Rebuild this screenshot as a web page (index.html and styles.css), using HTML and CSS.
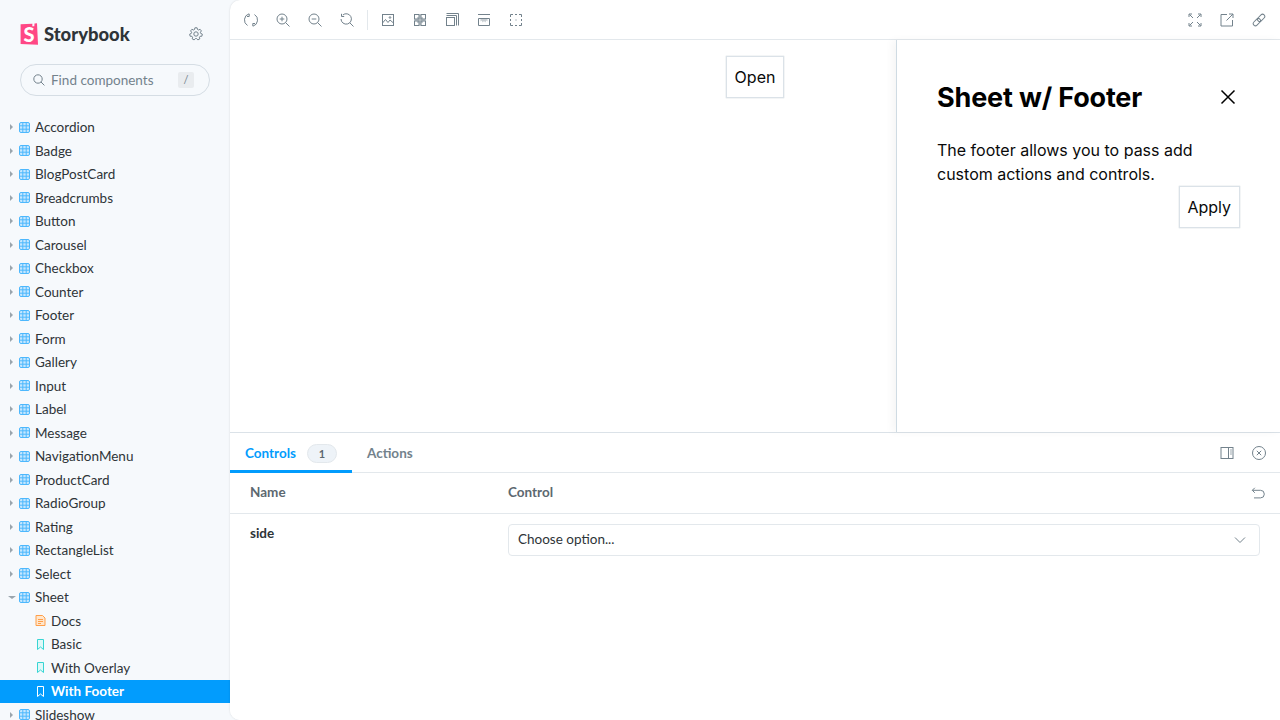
FILE: index.html
```html
<!DOCTYPE html>
<html lang="en">
<head>
    <meta charset="UTF-8">
    <title>Storybook</title>
    <link rel="stylesheet" href="styles.css">
</head>
<body>
    <div class="app">
        <!-- Sidebar -->
        <aside class="sidebar">
            <div class="brand">
                <div class="logo">
                    <svg class="logo-mark" width="18" height="22" viewBox="0 0 18 22"><path d="M.6 1.300 12.400.7 12.300 3.300 14.300 3.200 14.500.5 17 .3 18 21.700.6 21Z" fill="#ff4785"/></svg>
                    <span class="logo-s">S</span>
                    <span class="logo-text">Storybook</span>
                </div>
                <svg class="icon gear" width="14" height="14" viewBox="0 0 14 14"><path d="M5.900.8h2.200l.4 1.700 1 .5 1.600-.7 1.300 1.600-1 1.400.3 1.100 1.600.7-.4 2.100-1.800.1-.7.9.4 1.700-1.900 1-1.200-1.300H6.300l-1.200 1.300-1.900-1 .4-1.700-.7-.9-1.800-.1-.4-2.100 1.600-.7.3-1.100-1-1.400 1.300-1.600 1.600.7 1-.5Z"/><circle cx="7" cy="7" r="2.200"/></svg>
            </div>
            <div class="search">
                <svg class="icon" width="12" height="12" viewBox="0 0 12 12"><circle cx="5" cy="5" r="4.200"/><path d="m8 8 3.400 3.400"/></svg>
                <span class="search-label">Find components</span>
                <span class="kbd">/</span>
            </div>
            <ul class="tree" id="tree"></ul>
        </aside>

        <main class="main">
            <!-- Toolbar -->
            <div class="toolbar">
                <div class="tool-group">
                    <button class="tool"><svg class="icon" width="14" height="14" viewBox="0 0 14 14"><path d="M5 .8A6.500 6.500 0 0 0 3.500 12.500M9 13.200A6.500 6.500 0 0 0 10.500 1.500"/><path d="M3 3.500h2.200V.8M11 10.500H8.800v2.700"/></svg></button>
                    <button class="tool"><svg class="icon" width="14" height="14" viewBox="0 0 14 14"><circle cx="6" cy="6" r="5"/><path d="m9.600 9.600 3.900 3.900M3.700 6h4.600M6 3.700v4.600"/></svg></button>
                    <button class="tool"><svg class="icon" width="14" height="14" viewBox="0 0 14 14"><circle cx="6" cy="6" r="5"/><path d="m9.600 9.600 3.900 3.900M3.700 6h4.600"/></svg></button>
                    <button class="tool"><svg class="icon" width="14" height="14" viewBox="0 0 14 14"><path d="M2.800 2A5.200 5.200 0 1 1 1 6M9.800 9.800l3.700 3.700M1.500.8v2.700h2.700"/></svg></button>
                    <span class="tool-sep"></span>
                    <button class="tool"><svg class="icon" width="14" height="14" viewBox="0 0 14 14"><rect x="1.500" y="1.500" width="11" height="11"/><path d="m1.500 10 3-3.500 2.500 3 2-2.500 3.500 3"/><circle cx="9" cy="4.500" r=".8"/></svg></button>
                    <button class="tool"><svg class="icon" width="14" height="14" viewBox="0 0 14 14"><path class="fill" d="M4 4h2V1.500h2V4h2v2h2.500v2H10v2H8v2.500H6V10H4V8H1.500V6H4z"/><rect x="1.500" y="1.500" width="4.500" height="4.500"/><rect x="8" y="1.500" width="4.500" height="4.500"/><rect x="1.500" y="8" width="4.500" height="4.500"/><rect x="8" y="8" width="4.500" height="4.500"/></svg></button>
                    <button class="tool"><svg class="icon" width="14" height="14" viewBox="0 0 14 14"><rect x="1.500" y="4.500" width="8" height="8"/><path d="M1.500 2.500h10v10M1.500.5h12v12"/></svg></button>
                    <button class="tool"><svg class="icon" width="14" height="14" viewBox="0 0 14 14"><path d="M1 1.500h12M1.500 5.500h11v7h-11z"/><path class="fill" d="M3.500 5.500h7v3l-1.200-1-1 2-1.300-1.500L5.700 9.500l-1-2-1.200 1z"/></svg></button>
                    <button class="tool"><svg class="icon" width="14" height="14" viewBox="0 0 14 14"><path d="M1.500 4V1.500H4M10 1.500h2.500V4M12.500 10v2.500H10M4 12.500H1.500V10M1.500 6v2M12.500 6v2M6 1.500h2M6 12.500h2"/><path d="M6.500 7h1"/></svg></button>
                </div>
                <div class="tool-group">
                    <button class="tool"><svg class="icon" width="14" height="14" viewBox="0 0 14 14"><path d="m1.500 1.500 3.500 3.500M12.500 1.500 9 5M1.500 12.500 5 9M12.500 12.500 9 9M1 4V1h3M10 1h3v3M1 10v3h3M13 10v3h-3"/></svg></button>
                    <button class="tool"><svg class="icon" width="14" height="14" viewBox="0 0 14 14"><path d="M7 1.500H1v11.500h11.500V7M6.500 7.500l6.500-6.500M9 1h4v4"/></svg></button>
                    <button class="tool"><svg class="icon" width="14" height="14" viewBox="0 0 14 14"><g transform="rotate(-45 7 7)"><rect x="-.2" y="4.800" width="8.400" height="4.400" rx="2.200"/><rect x="5.800" y="4.800" width="8.400" height="4.400" rx="2.200"/></g></svg></button>
                </div>
            </div>

            <!-- Story preview -->
            <div class="preview">
                <button class="story-btn">Open</button>
                <div class="sheet">
                    <div class="sheet-head">
                        <h2>Sheet w/ Footer</h2>
                        <svg class="sheet-close" width="16" height="16" viewBox="0 0 16 16"><path d="m1.500 1.500 13 13M14.500 1.500l-13 13"/></svg>
                    </div>
                    <p>The footer allows you to pass add custom actions and controls.</p>
                    <div class="sheet-foot"><button class="story-btn">Apply</button></div>
                </div>
            </div>

            <!-- Addon panel -->
            <div class="panel">
                <div class="tabs">
                    <div class="tab active">Controls <span class="count">1</span></div>
                    <div class="tab">Actions</div>
                    <div class="tab-tools">
                        <button class="tool"><svg class="icon" width="14" height="14" viewBox="0 0 14 14"><rect x="1" y="1.500" width="12" height="11"/><path d="M8.500 1.500v11M10.300 4h1.400M10.300 6h1.400M10.300 8h1.400"/></svg></button>
                        <button class="tool"><svg class="icon" width="14" height="14" viewBox="0 0 14 14"><circle cx="7" cy="7" r="6.500"/><path d="m4.800 4.800 4.400 4.400M9.200 4.800 4.800 9.200"/></svg></button>
                    </div>
                </div>
                <div class="args-row args-head">
                    <div class="col-name">Name</div>
                    <div class="col-control">Control</div>
                    <svg class="icon reset" width="14" height="14" viewBox="0 0 14 14"><path d="M3.800 1.800 1.300 4.300l2.500 2.500M1.300 4.300h8.200a3.800 3.800 0 0 1 0 7.600H3"/></svg>
                </div>
                <div class="args-row">
                    <div class="col-name arg-name">side</div>
                    <div class="col-control">
                        <div class="select">
                            <span>Choose option...</span>
                            <svg class="icon" width="12" height="12" viewBox="0 0 12 12"><path d="m1 3.500 5 5 5-5"/></svg>
                        </div>
                    </div>
                </div>
            </div>
        </main>
    </div>

    <script>
        // sidebar tree
        const names = ["Accordion", "Badge", "BlogPostCard", "Breadcrumbs", "Button", "Carousel", "Checkbox", "Counter", "Footer", "Form", "Gallery", "Input", "Label", "Message", "NavigationMenu", "ProductCard", "RadioGroup", "Rating", "RectangleList", "Select"];
        const grid = '<svg class="kind" width="11" height="11" viewBox="0 0 11 11"><rect class="grid-bg" x=".5" y=".5" width="10" height="10" rx="1.500"/><path class="grid-line" d="M3.800 .5v10M7.200 .5v10M.5 3.800h10M.5 7.200h10"/></svg>';
        const mark = '<svg class="kind mark" width="11" height="11" viewBox="0 0 11 11"><path d="M2.500.5h6v10L5.500 8 2.500 10.500z"/></svg>';
        const doc = '<svg class="kind doc" width="11" height="11" viewBox="0 0 11 11"><path class="doc-page" d="M1 .5h6.500l2.500 2.500v7.500H1z"/><path d="M3 4.500h5M3 6.500h5M3 8.500h3"/></svg>';

        function comp(name, open) {
            return `<li class="row"><span class="arrow${open ? " open" : ""}"></span>${grid}<span>${name}</span></li>`;
        }
        function leaf(name, icon, cls) {
            return `<li class="row leaf ${cls}">${icon}<span>${name}</span></li>`;
        }

        let html = names.map(n => comp(n, false)).join("");
        html += comp("Sheet", true);
        html += leaf("Docs", doc, "");
        html += leaf("Basic", mark, "");
        html += leaf("With Overlay", mark, "");
        html += leaf("With Footer", mark, "selected");
        html += comp("Slideshow", false);
        document.getElementById("tree").innerHTML = html;
    </script>
</body>
</html>
```

FILE: styles.css
```css
* {
    box-sizing: border-box;
}

html, body {
    margin: 0;
    height: 100%;
    overflow: hidden;
}

body {
    font-family: Lato, sans-serif;
    font-size: 13.5px;
    color: #2e3438;
    background: #f6f9fc;
}

button {
    font: inherit;
    background: none;
    border: none;
    padding: 0;
}

.app {
    display: flex;
    height: 720px;
}

.icon {
    fill: none;
    stroke: #73828c;
    stroke-width: 1;
    flex: none;
}

.icon .fill {
    fill: #73828c;
    fill-opacity: 0.4;
    stroke: none;
}

/* sidebar */
.sidebar {
    width: 230px;
    flex: none;
    overflow: hidden;
    background: #f6f9fc;
}

.brand {
    display: flex;
    justify-content: space-between;
    align-items: center;
    height: 22px;
    margin: 23px 27px 0 20px;
}

.logo {
    display: flex;
    align-items: center;
    position: relative;
}

.logo-s {
    position: absolute;
    left: 0;
    width: 18px;
    text-align: center;
    font-size: 20px;
    font-weight: 900;
    color: #fff;
}

.logo-text {
    margin: 0 0 0 6px;
    font-size: 18.4px;
    font-weight: 900;
    color: #2e3438;
}

.search {
    display: flex;
    align-items: center;
    height: 32px;
    margin: 19px 20px 0;
    padding: 0 15px 0 12px;
    border: 1px solid #d5dde4;
    border-radius: 16px;
    color: #73828c;
}

.search-label {
    flex: 1;
    margin-left: 6px;
}

.kbd {
    width: 16px;
    height: 16px;
    line-height: 16px;
    text-align: center;
    font-size: 11px;
    border-radius: 2px;
    background: #e9ecef;
}

.tree {
    list-style: none;
    margin: 19.5px 0 0;
    padding: 0;
}

.row {
    display: flex;
    align-items: center;
    height: 23.5px;
    padding-left: 10px;
    white-space: nowrap;
}

.arrow {
    width: 0;
    height: 0;
    margin-right: 6px;
    border-left: 3px solid #9aa5ad;
    border-top: 3px solid transparent;
    border-bottom: 3px solid transparent;
}

.arrow.open {
    margin: 0 3px 0 -2px;
    border-top: 3px solid #9aa5ad;
    border-left: 4px solid transparent;
    border-right: 4px solid transparent;
    border-bottom: none;
}

.kind {
    flex: none;
    margin-right: 5px;
}

.grid-bg {
    fill: #c4e6fe;
    stroke: #4db8fd;
}

.grid-line {
    fill: none;
    stroke: #4db8fd;
}

.leaf {
    padding-left: 35px;
}

.leaf .kind {
    margin-right: 5px;
}

.mark path {
    fill: #dff8f8;
    stroke: #37d5d3;
}

.doc path {
    fill: none;
    stroke: #ff9f4a;
}

.doc .doc-page {
    fill: #ffe6cc;
}

.selected {
    background: #029cfd;
    color: #fff;
    font-weight: 700;
}

.selected .mark path {
    fill: #029cfd;
    stroke: #fff;
}

/* main area */
.main {
    flex: 1;
    display: flex;
    flex-direction: column;
    min-width: 0;
    background: #fff;
    border-radius: 10px 0 0 10px;
    box-shadow: 0 0 2px rgba(0, 0, 0, 0.15);
    overflow: hidden;
}

.toolbar {
    display: flex;
    justify-content: space-between;
    align-items: center;
    height: 40px;
    flex: none;
    padding: 0 5px;
    border-bottom: 1px solid #e3e8ec;
}

.tool-group {
    display: flex;
    align-items: center;
}

.tool {
    display: flex;
    align-items: center;
    justify-content: center;
    width: 32px;
    height: 28px;
}

.tool-sep {
    width: 1px;
    height: 20px;
    margin: 0 4px;
    background: #e3e8ec;
}

.preview {
    position: relative;
    height: 392px;
    flex: none;
    padding-top: 16px;
    text-align: center;
    font-family: Inter, sans-serif;
    color: #0a0a0a;
}

.story-btn {
    height: 42px;
    padding: 0 8px;
    font-family: Inter, sans-serif;
    font-size: 16px;
    color: #0a0a0a;
    background: #fff;
    border: 1px solid #dbe2e8;
    box-shadow: 0 0 1px rgba(120, 140, 160, 0.5);
}

.sheet {
    position: absolute;
    top: 0;
    right: 0;
    bottom: 0;
    width: 384px;
    padding: 40px;
    text-align: left;
    background: #fff;
    border-left: 1px solid #cfdbe3;
    box-shadow: -4px 0 8px rgba(0, 0, 0, 0.04);
}

.sheet-head {
    display: flex;
    justify-content: space-between;
    align-items: center;
    height: 34px;
}

.sheet h2 {
    margin: 0;
    font-size: 27px;
    font-weight: 700;
    letter-spacing: -0.17px;
    color: #000;
}

.sheet-close {
    fill: none;
    stroke: #000;
    stroke-width: 1.5;
    margin-right: 4px;
}

.sheet p {
    margin: 24px 0 0;
    font-size: 16px;
    line-height: 24px;
}

.sheet-foot {
    display: flex;
    justify-content: flex-end;
}

.sheet-foot .story-btn {
    padding-left: 7.5px;
}

.panel {
    flex: 1;
    border-top: 1px solid #dbe2e8;
    background: #fff;
}

.tabs {
    display: flex;
    align-items: stretch;
    height: 40px;
    border-bottom: 1px solid #e3e8ec;
    font-weight: 700;
    color: #73828c;
}

.tab {
    display: flex;
    align-items: center;
    padding: 0 15px;
}

.tab.active {
    color: #029cfd;
    border-bottom: 3px solid #029cfd;
    height: 40px;
    padding-top: 3px;
}

.count {
    width: 30px;
    height: 19px;
    line-height: 17px;
    margin-left: 11px;
    text-align: center;
    font-size: 11px;
    color: #5c6870;
    background: #eef3f8;
    border: 1px solid #e3e8ec;
    border-radius: 10px;
}

.tab-tools {
    display: flex;
    align-items: center;
    margin-left: auto;
    padding-right: 5px;
}

.args-row {
    display: flex;
    padding: 10px 20px;
}

.args-head {
    align-items: center;
    height: 41px;
    padding: 9px 20px 11px;
    border-bottom: 1px solid #e3e8ec;
    font-weight: 700;
    color: #5c6870;
}

.reset {
    margin: 1px -5px 0 0;
}

.col-name {
    width: 258px;
    flex: none;
}

.col-control {
    flex: 1;
}

.arg-name {
    padding-top: 1px;
    font-weight: 700;
}

.select {
    display: flex;
    justify-content: space-between;
    align-items: center;
    height: 32px;
    padding: 0 13px 0 9px;
    border: 1px solid #e3e8ec;
    border-radius: 4px;
    background: #fff;
}

.select span {
    margin-bottom: 2px;
}
```
